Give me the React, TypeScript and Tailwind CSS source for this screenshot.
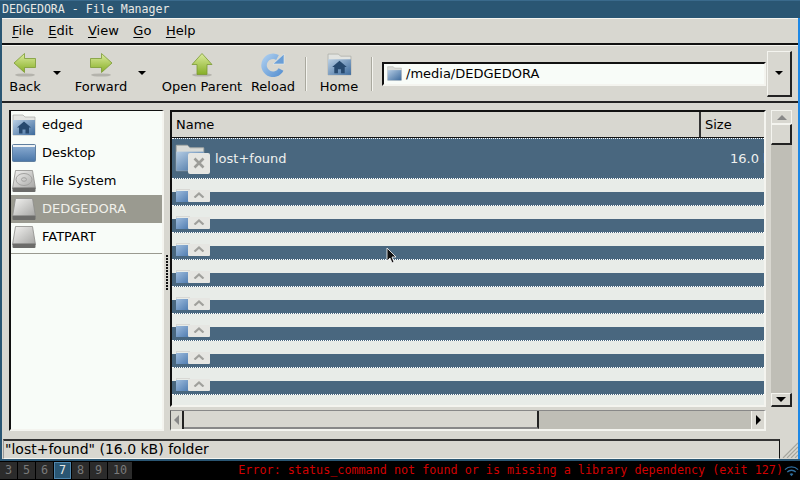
import React from "react";

const rows = [0, 1, 2, 3, 4, 5, 6, 7];
const menus = [
  ["F", "ile"],
  ["E", "dit"],
  ["V", "iew"],
  ["G", "o"],
  ["H", "elp"],
];

function FolderBlue({ className }: { className?: string }) {
  return (
    <svg viewBox="0 0 24 22" preserveAspectRatio="none" className={className}>
      <defs>
        <linearGradient id="fb" x1="0" y1="0" x2="1" y2="1">
          <stop offset="0" stopColor="#b4cce4" />
          <stop offset="1" stopColor="#3d6a9c" />
        </linearGradient>
      </defs>
      <path d="M1 1h9l2 2h11v18H1z" fill="#d9dbd7" stroke="#a9aba6" strokeWidth="0.7" />
      <rect x="1" y="6" width="22" height="15" fill="url(#fb)" />
    </svg>
  );
}

function HomeFolder({ className }: { className?: string }) {
  return (
    <svg viewBox="0 0 24 22" className={className}>
      <defs>
        <linearGradient id="hf" x1="0" y1="0" x2="1" y2="1">
          <stop offset="0" stopColor="#b9cfe4" />
          <stop offset="1" stopColor="#3d6a9c" />
        </linearGradient>
      </defs>
      <path d="M1 1h10l2 2h10v18H1z" fill="#e2e4e1" stroke="#a9aba6" strokeWidth="0.7" />
      <rect x="1" y="6" width="22" height="15" fill="url(#hf)" />
      <path d="M12 7.5l7 6h-2v6h-3.5v-4h-3v4H7v-6H5z" fill="#27496e" />
    </svg>
  );
}

function DesktopIcon() {
  return (
    <svg viewBox="0 0 24 18" className="h-[18px] w-[24px]">
      <defs>
        <linearGradient id="dk" x1="0" y1="0" x2="0" y2="1">
          <stop offset="0" stopColor="#8fb0d4" />
          <stop offset="1" stopColor="#4a76a8" />
        </linearGradient>
      </defs>
      <rect x="0.5" y="0.5" width="23" height="17" rx="1" fill="url(#dk)" stroke="#5f7f9f" />
      <rect x="1" y="1" width="22" height="2" fill="#eef2f4" />
    </svg>
  );
}

function Drive({ platter }: { platter?: boolean }) {
  return (
    <svg viewBox="0 0 24 24" className="h-[24px] w-[24px]">
      <defs>
        <linearGradient id="dr" x1="0" y1="0" x2="1" y2="1">
          <stop offset="0" stopColor="#f4f4f2" />
          <stop offset="1" stopColor="#a4a4a2" />
        </linearGradient>
      </defs>
      <path d="M3.5 1.5h17l3 18H.5z" fill="url(#dr)" stroke="#8d8d8a" strokeWidth="0.8" />
      <rect x="0.5" y="18.5" width="23" height="4.5" rx="1" fill="#6c6c6a" />
      {platter && <ellipse cx="12" cy="10.5" rx="8" ry="6" fill="none" stroke="#a2a2a0" strokeWidth="1" />}
      {platter && <ellipse cx="12" cy="10.5" rx="2.5" ry="1.8" fill="none" stroke="#a2a2a0" strokeWidth="1" />}
    </svg>
  );
}

function Arrow({ dir }: { dir: "left" | "right" | "up" }) {
  const d =
    dir === "left"
      ? "M1 10L11.5 .5v5H22.5v9H11.5v5z"
      : dir === "right"
        ? "M23 10L12.5 .5v5H1.5v9H12.5v5z"
        : "M12 .5L22 11.5h-5V21.5H7V11.5H2z";
  return (
    <svg viewBox="0 0 24 24" className="h-[24px] w-[24px]">
      <defs>
        <linearGradient id={`ar-${dir}`} x1="0" y1="0" x2="0" y2="1">
          <stop offset="0" stopColor="#dcec9e" />
          <stop offset="1" stopColor="#86ae26" />
        </linearGradient>
      </defs>
      <ellipse cx="12" cy="22" rx="10" ry="1.6" fill="#b4b3ac" />
      <path d={d} fill={`url(#ar-${dir})`} stroke="#7b9a34" strokeWidth="0.8" />
    </svg>
  );
}

function Reload() {
  return (
    <svg viewBox="0 0 24 24" className="h-[24px] w-[24px]">
      <defs>
        <linearGradient id="rl" x1="0" y1="0" x2="1" y2="1">
          <stop offset="0" stopColor="#a8cbee" />
          <stop offset="1" stopColor="#5c94d2" />
        </linearGradient>
      </defs>
      <path d="M20 16.5A9 9 0 1 1 16.5 4.5" fill="none" stroke="url(#rl)" strokeWidth="5.5" />
      <path d="M23 1v10H12z" fill="#6a9ed6" stroke="#e8eef0" strokeWidth="0.6" />
    </svg>
  );
}

function Caret({ className }: { className?: string }) {
  return <div className={`h-0 w-0 border-x-[4.5px] border-t-[4.5px] border-x-transparent border-t-black ${className ?? ""}`} />;
}

function ToolButton({ label, icon, w, className }: { label: string; icon: React.ReactNode; w: string; className?: string }) {
  return (
    <div className={`flex flex-col items-center ${w} ${className ?? ""}`}>
      <div className="flex h-[24px] items-center">{icon}</div>
      <span className="mt-[2px] leading-[16px]">{label}</span>
    </div>
  );
}

function SideItem({ icon, label, active }: { icon: React.ReactNode; label: string; active?: boolean }) {
  return (
    <div className={`flex h-[28px] shrink-0 items-center pl-[1px] ${active ? "bg-[#9a9a90] text-[#f0f0ea]" : "text-black"}`}>
      <div className="flex w-[24px] justify-center">{icon}</div>
      <span className="ml-[6px]">{label}</span>
    </div>
  );
}

function Grip() {
  return (
    <svg viewBox="0 0 16 16" className="h-[16px] w-[16px]">
      <path d="M1 16L16 1M5 16L16 5M9 16l7-7M13 16l3-3" stroke="#a5a59d" strokeWidth="1.2" />
    </svg>
  );
}

export default function App() {
  return (
    <div className="relative flex h-[480px] w-[800px] flex-col overflow-hidden bg-[#d8d7d0] text-[13px] text-black [font-family:'DejaVu_Sans',sans-serif]">
      {/* window title */}
      <div className="h-[18px] shrink-0 border-t border-[#3a6a8c] bg-[#2a5673] pl-[2px] text-[11.6px] leading-[16px] text-[#e8e8e4] [font-family:'DejaVu_Sans_Mono',monospace]">
        DEDGEDORA - File Manager
      </div>

      <div className="flex min-h-0 flex-1">
        <div className="w-[2px] shrink-0 bg-[#2a5673]" />
        <div className="flex min-w-0 flex-1 flex-col border-t border-[#f4f4ef]">
          {/* menu */}
          <div className="flex h-[26px] shrink-0 items-center gap-[14.5px] border-b-[2px] border-[#111] pl-[10px]">
            {menus.map(([k, rest]) => (
              <span key={k}>
                <span className="underline underline-offset-2">{k}</span>
                {rest}
              </span>
            ))}
          </div>

          {/* toolbar */}
          <div className="flex h-[58px] shrink-0 items-center border-b-[2px] border-t border-b-[#222] border-t-[#f4f4ef] pl-[1px]">
            <ToolButton label="Back" w="w-[44px]" icon={<Arrow dir="left" />} />
            <Caret className="ml-[6px] mt-[-2px]" />
            <ToolButton label="Forward" w="w-[56px]" className="ml-[12px]" icon={<Arrow dir="right" />} />
            <Caret className="ml-[9px] mt-[-2px]" />
            <ToolButton label="Open Parent" w="w-[82px]" className="ml-[15px]" icon={<Arrow dir="up" />} />
            <ToolButton label="Reload" w="w-[48px]" className="ml-[6px]" icon={<Reload />} />
            <div className="ml-[8px] h-[34px] w-[2px] border-l border-r border-l-[#aaa99f] border-r-[#f4f4ef]" />
            <ToolButton label="Home" w="w-[62px]" className="ml-[1px]" icon={<HomeFolder className="h-[23px] w-[25px]" />} />
            <div className="ml-[1px] h-[34px] w-[2px] border-l border-r border-l-[#aaa99f] border-r-[#f4f4ef]" />
            <div className="ml-[9px] flex h-[24px] w-[384px] shrink-0 items-center border-[2px] border-b-[#f4f4ef] border-l-[#111] border-r-[#f4f4ef] border-t-[#111] bg-[#f8fcf8] pl-[3px]">
              <FolderBlue className="h-[15px] w-[15px]" />
              <span className="ml-[4px]">/media/DEDGEDORA</span>
            </div>
            <div className="ml-[1px] flex h-[46px] w-[25px] shrink-0 items-center justify-center border border-b-[2px] border-r-[2px] border-b-[#222] border-l-[#f4f4ef] border-r-[#222] border-t-[#f4f4ef]">
              <Caret />
            </div>
          </div>

          {/* main */}
          <div className="flex min-h-0 flex-1 pl-[7px] pt-[7px]">
            {/* places */}
            <div className="flex h-[321px] w-[155px] shrink-0 flex-col border-b-[2px] border-l-[2px] border-r-[2px] border-t-[1px] border-b-[#f4f4ef] border-l-[#111] border-r-[#f4f4ef] border-t-[#111] bg-[#f8fcf8]">
              <SideItem icon={<HomeFolder className="h-[22px] w-[24px]" />} label="edged" />
              <SideItem icon={<DesktopIcon />} label="Desktop" />
              <SideItem icon={<Drive platter />} label="File System" />
              <SideItem active icon={<Drive />} label="DEDGEDORA" />
              <SideItem icon={<Drive />} label="FATPART" />
              <div className="mt-[2px] h-[1px] bg-[#9a9a90]" />
            </div>

            {/* pane handle */}
            <div className="flex h-[321px] w-[6px] shrink-0 flex-col items-center justify-center gap-[1px] pt-[3px]">
              {[0, 1, 2, 3, 4, 5, 6, 7, 8, 9, 10, 11].map((i) => (
                <div key={i} className="h-[2px] w-[2px] bg-[#111]" />
              ))}
            </div>

            {/* file list + scrollbars */}
            <div className="flex w-[622px] shrink-0 flex-col">
              <div className="flex h-[297px]">
                <div className="flex w-[596px] shrink-0 flex-col overflow-hidden border-[2px] border-b-[#f4f4ef] border-l-[#111] border-r-[#f4f4ef] border-t-[#111] bg-[#e8ece8]">
                  <div className="flex h-[26px] shrink-0 border-b-[1px] border-[#111] bg-[#d8d7d0]">
                    <div className="flex w-[529px] shrink-0 items-center border-r-[2px] border-r-[#333] pl-[4px]">Name</div>
                    <div className="flex flex-1 items-center pl-[4px]">Size</div>
                  </div>
                  <div className="relative flex h-[41px] shrink-0 items-center border-y border-dotted border-white bg-[#49677f] text-[#eef0ee]">
                    <div className="relative ml-[3px] h-[30px] w-[35px]">
                      <FolderBlue className="h-[28px] w-[30px]" />
                      <div className="absolute bottom-[0px] right-[0px] flex h-[21px] w-[22px] items-center justify-center rounded-[2px] bg-[#e6e6e2]">
                        <svg viewBox="0 0 12 12" className="h-[12px] w-[12px]">
                          <path d="M1.5 1.5l9 9M10.5 1.5l-9 9" stroke="#9c9c98" strokeWidth="2.6" />
                        </svg>
                      </div>
                    </div>
                    <span className="ml-[5px]">lost+found</span>
                    <span className="absolute left-[558px] top-[10px] whitespace-nowrap">16.0 kB</span>
                  </div>
                  {rows.map((r) => (
                    <div key={r} className="relative h-[27px] shrink-0">
                      <div className="absolute bottom-0 left-0 right-0 h-[14px] border-b border-dotted border-white bg-[#49677f]" />
                      <div className="absolute left-[4px] top-[10px] h-[14px] w-[34px] overflow-hidden">
                        <div className="absolute left-0 top-0 h-[3px] w-[14px] border border-[#d8d8d4] bg-[#e8ece8]" />
                        <div className="absolute left-0 top-[2px] h-[11px] w-[13px] bg-gradient-to-br from-[#9dbbdc] to-[#4f7cb0]" />
                        <div className="absolute left-[12px] top-[1px] flex h-[12px] w-[22px] items-start justify-center rounded-[1px] bg-[#e6e6e2]">
                          <svg viewBox="0 0 12 6" className="mt-[2px] h-[6px] w-[12px]">
                            <path d="M1.5 5.5L6 1.5l4.5 4" fill="none" stroke="#a0a09c" strokeWidth="2.2" />
                          </svg>
                        </div>
                      </div>
                    </div>
                  ))}
                </div>

                {/* vertical scrollbar */}
                <div className="ml-[5px] flex w-[21px] shrink-0 flex-col bg-[#bfbeb6]">
                  <div className="flex h-[14px] shrink-0 items-center justify-center border border-[#f4f4ef] bg-[#d8d7d0]">
                    <div className="h-0 w-0 border-x-[5px] border-b-[5px] border-x-transparent border-b-[#888]" />
                  </div>
                  <div className="h-[21px] shrink-0 border border-b-[2px] border-r-[2px] border-b-[#222] border-l-[#f4f4ef] border-r-[#222] border-t-[#f4f4ef] bg-[#d8d7d0]" />
                  <div className="flex-1" />
                  <div className="flex h-[14px] shrink-0 items-center justify-center border border-b-[2px] border-r-[2px] border-b-[#222] border-l-[#f4f4ef] border-r-[#222] border-t-[#f4f4ef] bg-[#d8d7d0]">
                    <div className="h-0 w-0 border-x-[5px] border-t-[5px] border-x-transparent border-t-black" />
                  </div>
                </div>
              </div>

              {/* horizontal scrollbar */}
              <div className="mt-[3px] flex h-[21px] w-[596px] border-b-[2px] border-l-[1px] border-r-[2px] border-t-[1px] border-b-[#f4f4ef] border-l-[#555] border-r-[#f4f4ef] border-t-[#888] bg-[#bfbeb6]">
                <div className="flex w-[13px] shrink-0 items-center justify-center border-r-[2px] border-r-[#222] bg-[#d8d7d0]">
                  <div className="h-0 w-0 border-y-[5px] border-r-[5px] border-y-transparent border-r-[#888]" />
                </div>
                <div className="w-[355px] shrink-0 border-b-[2px] border-r-[2px] border-b-[#888] border-r-[#222] bg-[#d8d7d0]" />
                <div className="flex-1" />
                <div className="flex w-[13px] shrink-0 items-center justify-center border-l border-l-[#f4f4ef] bg-[#d8d7d0]">
                  <div className="h-0 w-0 border-y-[5px] border-l-[5px] border-y-transparent border-l-black" />
                </div>
              </div>
            </div>
          </div>

          {/* status */}
          <div className="flex h-[20px] shrink-0 items-end">
            <div className="ml-[1px] h-[20px] w-[777px] border-b-[1px] border-l-[1px] border-r-[1px] border-t-[2px] border-b-[#f4f4ef] border-l-[#999] border-r-[#111] border-t-[#333] pl-[1px] text-[14px] leading-[16px]">
              "lost+found" (16.0 kB) folder
            </div>
            <div className="flex flex-1 justify-end pb-[1px]">
              <Grip />
            </div>
          </div>
        </div>
        <div className="w-[2px] shrink-0 bg-[#1e88e5]" />
      </div>

      {/* panel */}
      <div className="flex h-[21px] shrink-0 items-center border-t-[2px] border-[#2a5673] bg-black text-[11.76px] [font-family:'DejaVu_Sans_Mono',monospace]">
        <div className="flex gap-[1px]">
          {["3", "5", "6", "7", "8", "9", "10"].map((n) => (
            <div
              key={n}
              className={`flex h-[17px] items-center justify-center ${n === "10" ? "w-[24px]" : "w-[17px]"} ${
                n === "7" ? "border border-[#4f86ad] bg-[#2a5673] text-[#e8e8e4]" : "bg-[#2b2b2b] text-[#7a7a7a]"
              }`}
            >
              {n}
            </div>
          ))}
        </div>
        <div className="flex-1 whitespace-nowrap text-right text-[#d10000]">
          Error: status_command not found or is missing a library dependency (exit 127)
        </div>
        <svg viewBox="0 0 16 12" className="ml-[1px] mr-[1px] h-[12px] w-[15px]">
          <path d="M1 4.5a10 10 0 0 1 14 0M3.5 7a6.5 6.5 0 0 1 9 0" fill="none" stroke="#2f6d9c" strokeWidth="1.4" />
          <path d="M6 9.3a3 3 0 0 1 4 0L8 11.5z" fill="#2f6d9c" />
        </svg>
      </div>

      {/* pointer */}
      <svg viewBox="0 0 12 17" className="absolute left-[386px] top-[247px] h-[17px] w-[12px]">
        <path d="M1 1v13l3-3 2 5 2-1-2-5h4z" fill="#111" stroke="#fff" strokeWidth="0.8" />
      </svg>
    </div>
  );
}
